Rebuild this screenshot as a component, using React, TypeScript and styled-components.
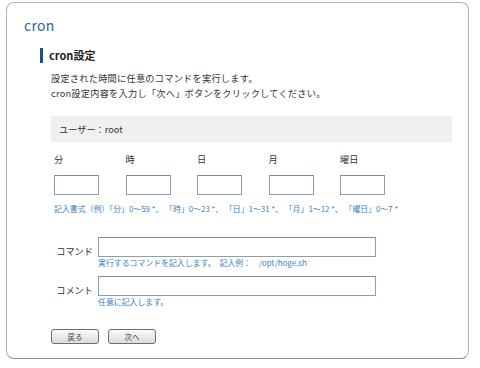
import React from "react";
import styled, { createGlobalStyle } from "styled-components";

const GlobalStyle = createGlobalStyle`
  html, body {
    margin: 0;
    padding: 0;
    background: #ffffff;
  }
  body {
    font-family: "Noto Sans CJK JP", "Liberation Sans", sans-serif;
    color: #333333;
  }
`;

const Panel = styled.div`
  box-sizing: border-box;
  margin: 2px 0 0 6px;
  width: 463px;
  height: 357px;
  border: 1px solid #b4b4b4;
  border-bottom-color: #8c8c8c;
  border-radius: 8px;
  padding: 12px 0 0 17px;
`;

const Title = styled.h1`
  margin: 0;
  font-size: 14px;
  font-weight: 400;
  line-height: 20px;
  color: #2f6496;
  letter-spacing: 0.3px;
`;

const Heading = styled.h2`
  margin: 13px 0 0 16px;
  padding-left: 6px;
  border-left: 3px solid #1d4e86;
  font-size: 11px;
  font-weight: 700;
  line-height: 15px;
  color: #222222;
`;

const Body = styled.div`
  margin: 8px 0 0 27px;
  width: 401px;
`;

const Lead = styled.p`
  margin: 0;
  font-size: 9.2px;
  line-height: 15px;
  letter-spacing: 0.25px;
  white-space: nowrap;

  span {
    display: block;
    height: 15px;
  }
`;

const UserBox = styled.div`
  margin-top: 15px;
  height: 26px;
  display: flex;
  align-items: center;
  padding-left: 8px;
  background: #f0f0f0;
  font-size: 9.2px;
`;

const TimeGrid = styled.div`
  display: grid;
  grid-template-columns: repeat(5, 45px);
  column-gap: 26.5px;
  margin: 10px 0 0 3px;
`;

const Field = styled.div`
  display: flex;
  flex-direction: column;
`;

const FieldLabel = styled.label`
  font-size: 9.2px;
  line-height: 14px;
  margin-bottom: 9px;
`;

const Input = styled.input<{ $w: number }>`
  box-sizing: border-box;
  width: ${(p) => p.$w}px;
  height: 20px;
  margin: 0;
  border: 1px solid #8d9db3;
  border-top-color: #7d8ca3;
  background: #ffffff;
  padding: 0 3px;
  font-family: inherit;
`;

const Hint = styled.div`
  font-size: 7.9px;
  line-height: 12px;
  color: #3b7fbf;
  white-space: pre;
`;

const TimeHint = styled(Hint)`
  margin: 8px 0 0 3px;
`;

const Rows = styled.div`
  display: flex;
  flex-direction: column;
  gap: 7px;
  margin: 22px 0 0 3px;
`;

const Row = styled.div`
  display: grid;
  grid-template-columns: 44px auto;
  align-items: end;
`;

const RowLabel = styled.label`
  font-size: 9.2px;
  line-height: 14px;
  text-align: right;
  padding-right: 5px;
  align-self: end;
  margin-bottom: -1px;
`;

const RowHint = styled(Hint)`
  grid-column: 2;
`;

const Buttons = styled.div`
  display: flex;
  gap: 9px;
  margin: 21px 0 0 0;
`;

const Button = styled.button`
  box-sizing: border-box;
  width: 48px;
  height: 15px;
  padding: 0;
  border: 1px solid #6e6e6e;
  border-radius: 3px;
  background: linear-gradient(#fafafa, #dcdcdc);
  font-family: inherit;
  font-size: 7.5px;
  color: #444444;
  line-height: 13px;
`;

const labels = ["分", "時", "日", "月", "曜日"];

const App: React.FC = () => {
  return (
    <>
      <GlobalStyle />
      <Panel>
        <Title>cron</Title>
        <Heading>cron設定</Heading>
        <Body>
          <Lead>
            <span>設定された時間に任意のコマンドを実行します。</span>
            <span>cron設定内容を入力し「次へ」ボタンをクリックしてください。</span>
          </Lead>
          <UserBox>ユーザー：root</UserBox>
          <TimeGrid>
            {labels.map((l) => (
              <Field key={l}>
                <FieldLabel>{l}</FieldLabel>
                <Input $w={45} />
              </Field>
            ))}
          </TimeGrid>
          <TimeHint>
            記入書式（例）「分」0〜59 *、 「時」0〜23 *、 「日」1〜31 *、 「月」1〜12 *、 「曜日」0〜7 *
          </TimeHint>
          <Rows>
            <Row>
              <RowLabel>コマンド</RowLabel>
              <Input $w={278} />
              <RowHint>実行するコマンドを記入します。　記入例：　/opt/hoge.sh</RowHint>
            </Row>
            <Row>
              <RowLabel>コメント</RowLabel>
              <Input $w={278} />
              <RowHint>任意に記入します。</RowHint>
            </Row>
          </Rows>
          <Buttons>
            <Button>戻る</Button>
            <Button>次へ</Button>
          </Buttons>
        </Body>
      </Panel>
    </>
  );
};

export default App;
